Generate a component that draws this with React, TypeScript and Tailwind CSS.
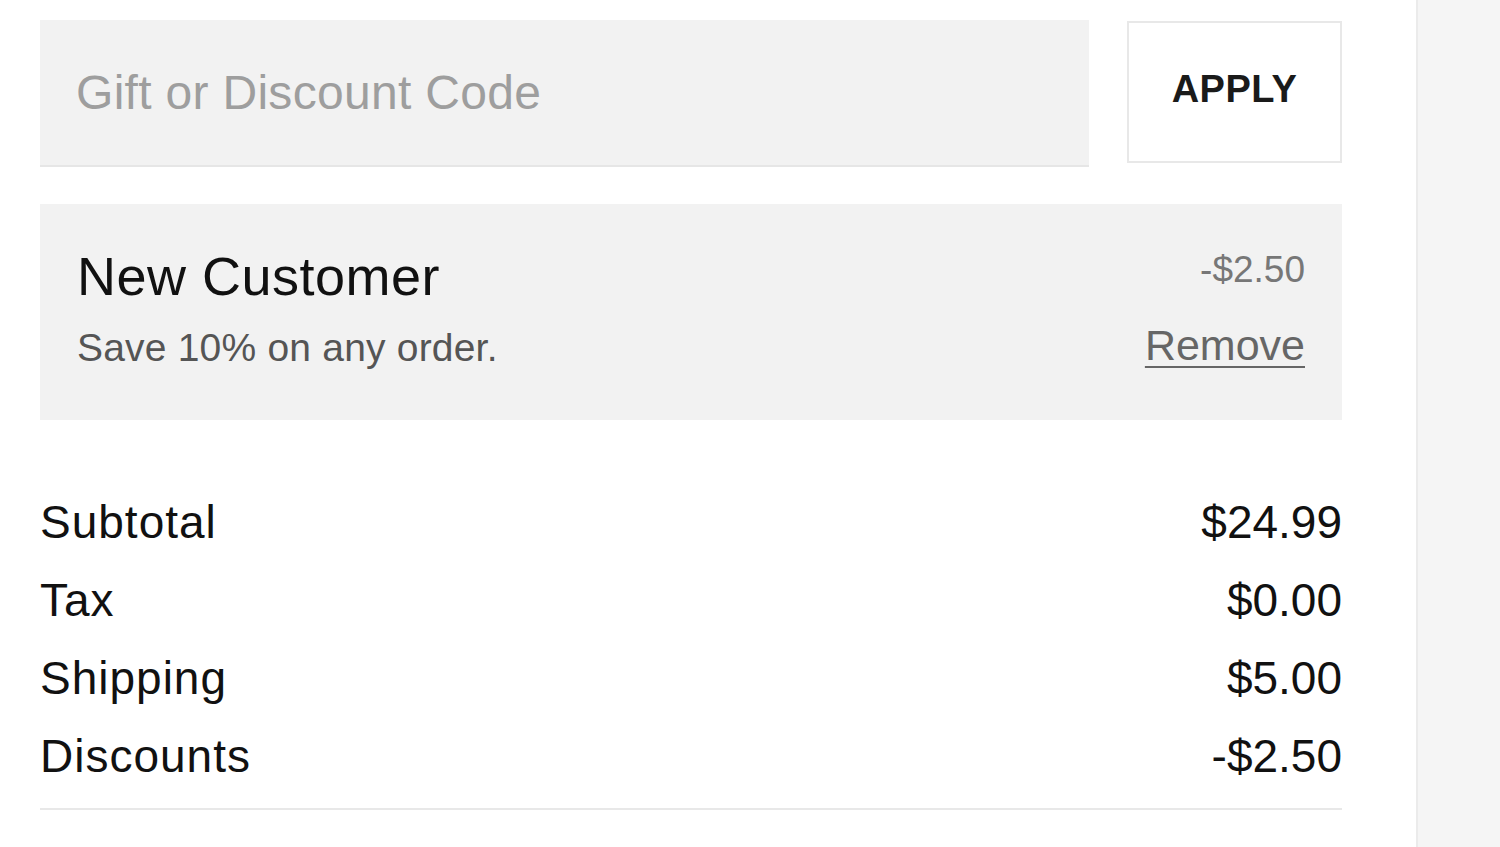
import React from "react";

const rows = [
  { label: "Subtotal", value: "$24.99" },
  { label: "Tax", value: "$0.00" },
  { label: "Shipping", value: "$5.00" },
  { label: "Discounts", value: "-$2.50" },
];

export default function App() {
  return (
    <div
      className="flex w-[1500px] h-[847px] overflow-hidden bg-white text-[#111]"
      style={{ fontFamily: '"Liberation Sans", Arial, sans-serif' }}
    >
      <div className="w-[1418px] shrink-0 border-r-2 border-[#ebebeb] pl-[40px] pt-[20px]">
        <div className="w-[1302px]">
          <div className="flex items-start gap-[38px]">
            <div className="flex h-[147px] flex-1 items-center border-b-2 border-[#e6e6e6] bg-[#f2f2f2] pl-[36px]">
              <input
                className="w-full bg-transparent text-[48px] tracking-[0.3px] text-[#333] outline-none placeholder:text-[#9e9e9e]"
                placeholder="Gift or Discount Code"
              />
            </div>
            <button className="mt-[1px] flex h-[142px] w-[215px] items-center justify-center border-2 border-[#e8e8e8] bg-white pb-[6px] text-[38px] font-bold tracking-[0.5px] text-[#1a1a1a]">
              APPLY
            </button>
          </div>

          <div className="mt-[37px] flex h-[216px] justify-between bg-[#f2f2f2] px-[37px] pt-[42px]">
            <div className="flex flex-col">
              <div className="text-[54px] leading-[60px] tracking-[0.5px] text-[#111]">New Customer</div>
              <div className="mt-[18px] text-[39px] leading-[48px] tracking-[0.2px] text-[#555]">
                Save 10% on any order.
              </div>
            </div>
            <div className="flex flex-col items-end">
              <div className="mt-[1px] text-[37px] leading-[46px] text-[#777]">-$2.50</div>
              <a className="mt-[28px] cursor-pointer text-[43px] leading-[48px] text-[#666] underline decoration-2 underline-offset-[6px]">
                Remove
              </a>
            </div>
          </div>

          <div className="mt-[63px] flex flex-col">
            {rows.map((r) => (
              <div key={r.label} className="flex justify-between text-[46px] leading-[78px] text-[#111]">
                <span className="tracking-[1px]">{r.label}</span>
                <span>{r.value}</span>
              </div>
            ))}
          </div>
          <div className="mt-[13px] h-[2px] bg-[#e8e8e8]" />
        </div>
      </div>
      <div className="flex-1 bg-[#f5f5f5]" />
    </div>
  );
}
